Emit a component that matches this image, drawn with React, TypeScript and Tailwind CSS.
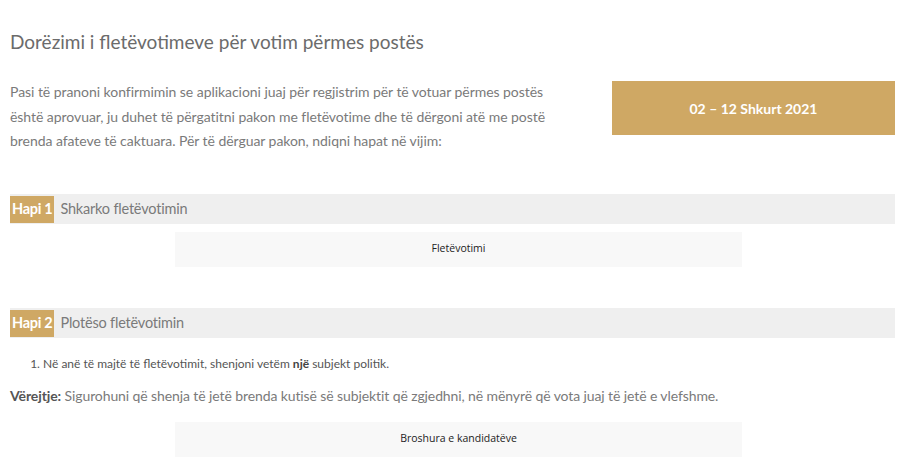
const font = "font-['Lato','Open_Sans',sans-serif]";

function StepBar({ n, label }: { n: number; label: string }) {
  return (
    <div className="flex h-[30px] items-start bg-[#efefef] pt-[2px]">
      <span className="flex h-[27px] items-center bg-[#cfa864] px-[2px] text-[14.5px] font-bold tracking-[-0.3px] text-white">
        Hapi {n}
      </span>
      <span className="ml-[6px] flex h-[27px] items-center text-[14.5px] tracking-[-0.2px] text-[#7a7a7a]">{label}</span>
    </div>
  );
}

function DocButton({ children }: { children: string }) {
  return (
    <div className="ml-[165px] flex h-[35px] w-[567px] items-center justify-center bg-[#f8f8f8] font-['Open_Sans',sans-serif] text-[10.5px] text-[#222]">
      {children}
    </div>
  );
}

export default function App() {
  return (
    <div className={`h-[468px] w-[900px] overflow-hidden bg-white pl-[10px] pr-[5px] ${font}`}>
      <h1 className="pt-[28px] text-[19px] leading-[28px] text-[#6b6b6b]">
        Dorëzimi i fletëvotimeve për votim përmes postës
      </h1>

      <div className="mt-[24px] flex items-start justify-between">
        <p className="w-[550px] text-[14px] leading-[24.5px] tracking-[-0.05px] text-[#7a7a7a]">
          Pasi të pranoni konfirmimin se aplikacioni juaj për regjistrim për të votuar përmes postës është
          aprovuar, ju duhet të përgatitni pakon me fletëvotime dhe të dërgoni atë me postë brenda afateve
          të caktuara. Për të dërguar pakon, ndiqni hapat në vijim:
        </p>
        <div className="mt-px flex h-[54px] w-[283px] items-center justify-center bg-[#cfa864] text-[14px] font-bold text-white">
          02 – 12 Shkurt 2021
        </div>
      </div>

      <div className="mt-[40px]">
        <StepBar n={1} label="Shkarko fletëvotimin" />
      </div>
      <div className="mt-[8px]">
        <DocButton>Fletëvotimi</DocButton>
      </div>

      <div className="mt-[41px]">
        <StepBar n={2} label="Plotëso fletëvotimin" />
      </div>
      <ol className="mt-[16px] list-decimal pl-[33px] text-[12px] leading-[20px] text-[#555]">
        <li>
          Në anë të majtë të fletëvotimit, shenjoni vetëm <b className="font-bold text-[#444]">një</b> subjekt
          politik.
        </li>
      </ol>
      <p className="mt-[10px] text-[14px] leading-[24px] tracking-[-0.1px] text-[#7a7a7a]">
        <b className="font-bold text-[#555]">Vërejtje:</b> Sigurohuni që shenja të jetë brenda kutisë së
        subjektit që zgjedhni, në mënyrë që vota juaj të jetë e vlefshme.
      </p>
      <div className="mt-[14px]">
        <DocButton>Broshura e kandidatëve</DocButton>
      </div>
    </div>
  );
}
